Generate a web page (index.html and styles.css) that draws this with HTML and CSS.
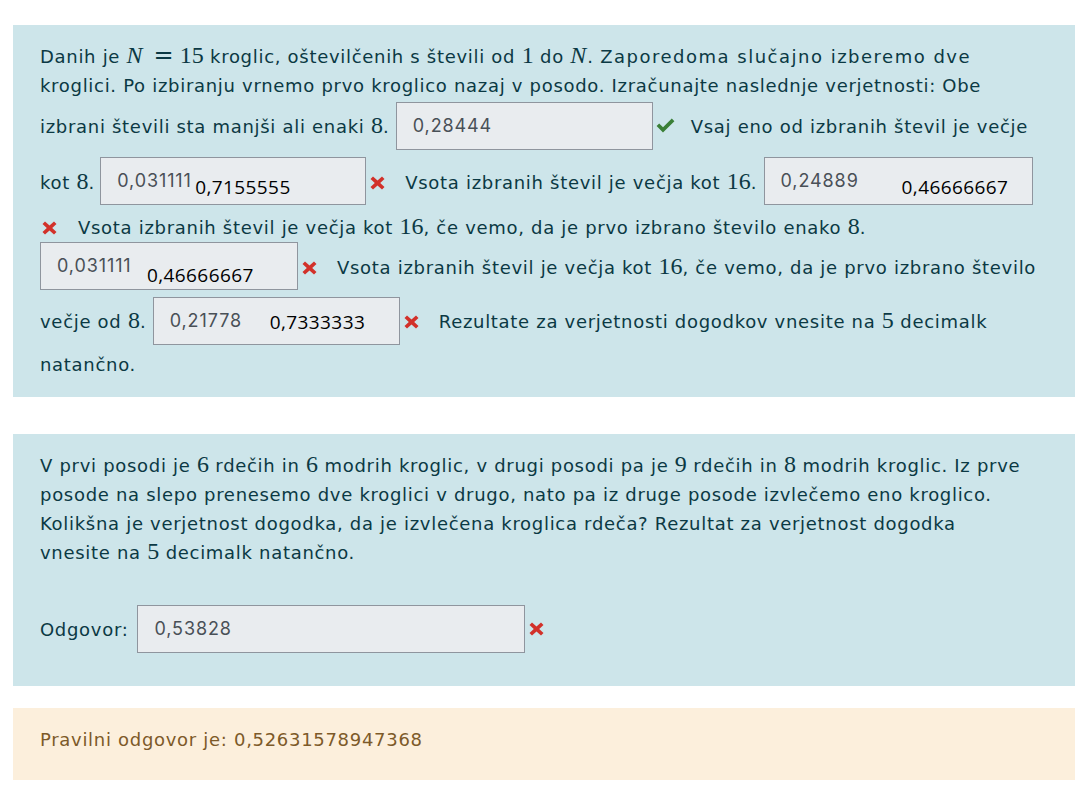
FILE: index.html
```html
<!DOCTYPE html>
<html lang="sl">
<head>
<meta charset="utf-8">
<title>Verjetnost</title>
<link rel="stylesheet" href="styles.css">
</head>
<body>
<div class="que">
  <p class="qtext">Danih je <span class="mi">N</span><span class="mo">=</span><span class="mn">15</span> kroglic, oštevilčenih s števili od <span class="mn">1</span> do <span class="mi">N</span>. <span class="wide">Zaporedoma slučajno izberemo dve</span><br>kroglici. Po izbiranju vrnemo prvo kroglico nazaj v posodo. Izračunajte naslednje verjetnosti: Obe<br>izbrani števili sta manjši ali enaki <span class="mn">8</span>. <span class="inp w1"><span class="val">0,28444</span></span><span class="ic ok"><svg viewBox="0 0 19 15"><path d="M0.6 8 L3.2 5.4 L7 9.2 L15.8 0.6 L18.4 3.2 L7 14.4 Z" /></svg></span>Vsaj eno od izbranih števil je večje<br>kot <span class="mn">8</span>. <span class="inp w2"><span class="val">0,031111</span><span class="ov ov2">0,7155555</span></span><span class="ic bad"><svg viewBox="0 0 15 14"><path d="M0.5 3 L3 0.5 L7.5 4.6 L12 0.5 L14.5 3 L10.2 7 L14.5 11 L12 13.5 L7.5 9.4 L3 13.5 L0.5 11 L4.8 7 Z"/></svg></span>Vsota izbranih števil je večja kot <span class="mn">16</span>. <span class="inp w3"><span class="val">0,24889</span><span class="ov ov3">0,46666667</span></span><br><span class="ic bad first"><svg viewBox="0 0 15 14"><path d="M0.5 3 L3 0.5 L7.5 4.6 L12 0.5 L14.5 3 L10.2 7 L14.5 11 L12 13.5 L7.5 9.4 L3 13.5 L0.5 11 L4.8 7 Z"/></svg></span>Vsota izbranih števil je večja kot <span class="mn">16</span>, če vemo, da je prvo izbrano število enako <span class="mn">8</span>.<br><span class="inp w4"><span class="val">0,031111</span><span class="ov ov4">0,46666667</span></span><span class="ic bad"><svg viewBox="0 0 15 14"><path d="M0.5 3 L3 0.5 L7.5 4.6 L12 0.5 L14.5 3 L10.2 7 L14.5 11 L12 13.5 L7.5 9.4 L3 13.5 L0.5 11 L4.8 7 Z"/></svg></span>Vsota izbranih števil je večja kot <span class="mn">16</span>, če vemo, da je prvo izbrano število<br>večje od <span class="mn">8</span>. <span class="inp w5"><span class="val">0,21778</span><span class="ov ov5">0,7333333</span></span><span class="ic bad"><svg viewBox="0 0 15 14"><path d="M0.5 3 L3 0.5 L7.5 4.6 L12 0.5 L14.5 3 L10.2 7 L14.5 11 L12 13.5 L7.5 9.4 L3 13.5 L0.5 11 L4.8 7 Z"/></svg></span>Rezultate za verjetnosti dogodkov vnesite na <span class="mn">5</span> decimalk<br>natančno.</p>
</div>

<div class="que que2">
  <p class="qtext">V prvi posodi je <span class="mn">6</span> rdečih in <span class="mn">6</span> modrih kroglic, v drugi posodi pa je <span class="mn">9</span> rdečih in <span class="mn">8</span> modrih kroglic. Iz prve<br>posode na slepo prenesemo dve kroglici v drugo, nato pa iz druge posode izvlečemo eno kroglico.<br>Kolikšna je verjetnost dogodka, da je izvlečena kroglica rdeča? Rezultat za verjetnost dogodka<br>vnesite na <span class="mn">5</span> decimalk natančno.</p>
  <div class="answer">
    <span class="lbl">Odgovor:</span>
    <span class="inp w6"><span class="val">0,53828</span></span>
    <span class="ic bad"><svg viewBox="0 0 15 14"><path d="M0.5 3 L3 0.5 L7.5 4.6 L12 0.5 L14.5 3 L10.2 7 L14.5 11 L12 13.5 L7.5 9.4 L3 13.5 L0.5 11 L4.8 7 Z"/></svg></span>
  </div>
</div>

<div class="outcome">Pravilni odgovor je: 0,52631578947368</div>
</body>
</html>
```

FILE: styles.css
```css
html, body {
  margin: 0;
  padding: 0;
  background: #ffffff;
}
body {
  padding: 25px 14px 6px 13px;
  font-family: "DejaVu Sans", "Open Sans", sans-serif;
  font-size: 18px;
  line-height: 29px;
  letter-spacing: 0.7px;
  color: #0b3944;
}
.que {
  background: #cde5ea;
  padding: 17px 27px 18px 27px;
}
.que2 {
  margin-top: 37px;
  padding-bottom: 33px;
}
.qtext {
  margin: 0;
  white-space: nowrap;
}
.wide {
  letter-spacing: 1.5px;
}
.mi, .mn {
  font-family: "Liberation Serif", "DejaVu Serif", serif;
  font-size: 24px;
  line-height: 20px;
  letter-spacing: 0;
}
.mi {
  font-style: italic;
  padding-right: 1px;
}
.mo {
  font-family: "DejaVu Serif", serif;
  font-size: 24px;
  line-height: 20px;
  letter-spacing: 0;
  padding: 0 6px 0 10px;
}
.inp {
  position: relative;
  display: inline-block;
  box-sizing: border-box;
  height: 48px;
  vertical-align: middle;
  margin: 2px 0 5px 0;
  padding: 0 16px;
  background: #e9ecef;
  border: 1px solid #8f959e;
  line-height: 46px;
  color: #495057;
  white-space: nowrap;
}
.val {
  font-family: "Inter", "DejaVu Sans", sans-serif;
  font-size: 18px;
  letter-spacing: 0.9px;
}
.w1 { width: 257px; }
.w2 { width: 266px; margin-left: -1px; margin-bottom: 8px; }
.w3 { width: 269px; margin-bottom: 8px; }
.w4 { width: 258px; margin-top: 0; }
.w5 { width: 247px; }
.w6 { width: 388px; }
.ov {
  position: absolute;
  top: 6px;
  color: #000000;
  font-family: "Open Sans", sans-serif;
  font-size: 19px;
  letter-spacing: 0.4px;
}
.ov2 { left: 94px; }
.ov3 { left: 137px; }
.ov4 { left: 106px; top: 9px; }
.ov5 { left: 116px; top: 1px; }
.ic {
  display: inline-block;
  margin: 0 20px 0 4px;
  vertical-align: -1px;
}
.ic svg {
  display: block;
  width: 15px;
  height: 14px;
}
.ok {
  margin: 0 16px 0 3px;
  vertical-align: 0px;
}
.ok svg {
  width: 19px;
  height: 15px;
  fill: #3a7f37;
}
.bad svg { fill: #d2312a; }
.ic.first {
  margin-left: 2px;
  margin-right: 21px;
}
.answer {
  display: flex;
  align-items: center;
  margin-top: 38px;
}
.answer .lbl {
  margin-right: 9px;
}
.answer .inp {
  margin: 0;
}
.answer .ic {
  margin-left: 4px;
}
.outcome {
  margin-top: 22px;
  background: #fcefdc;
  color: #7d5a29;
  padding: 17px 27px 26px 27px;
}
```
